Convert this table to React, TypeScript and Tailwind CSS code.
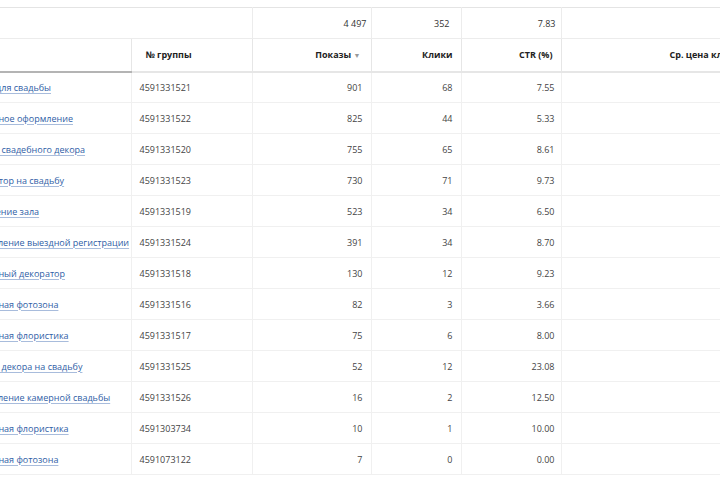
const rows = [
    { name: 'Декор для свадьбы', group: '4591331521', shows: '901', clicks: '68', ctr: '7.55' },
    { name: 'Свадебное оформление', group: '4591331522', shows: '825', clicks: '44', ctr: '5.33' },
    { name: 'Аренда свадебного декора', group: '4591331520', shows: '755', clicks: '65', ctr: '8.61' },
    { name: 'Декоратор на свадьбу', group: '4591331523', shows: '730', clicks: '71', ctr: '9.73' },
    { name: 'Украшение зала', group: '4591331519', shows: '523', clicks: '34', ctr: '6.50' },
    { name: 'Оформление выездной регистрации', group: '4591331524', shows: '391', clicks: '34', ctr: '8.70' },
    { name: 'Свадебный декоратор', group: '4591331518', shows: '130', clicks: '12', ctr: '9.23' },
    { name: 'Свадебная фотозона', group: '4591331516', shows: '82', clicks: '3', ctr: '3.66' },
    { name: 'Свадебная флористика', group: '4591331517', shows: '75', clicks: '6', ctr: '8.00' },
    { name: 'Аренда декора на свадьбу', group: '4591331525', shows: '52', clicks: '12', ctr: '23.08' },
    { name: 'Оформление камерной свадьбы', group: '4591331526', shows: '16', clicks: '2', ctr: '12.50' },
    { name: 'Свадебная флористика', group: '4591303734', shows: '10', clicks: '1', ctr: '10.00' },
    { name: 'Свадебная фотозона', group: '4591073122', shows: '7', clicks: '0', ctr: '0.00' },
];

const cell = 'h-[31px] border-b border-[#f0f0f0] p-0 align-middle';
const vline = 'border-l border-[#e6e6e6]';

export default function App() {
    return (
        <div className="h-[480px] w-[720px] overflow-hidden bg-white" style={{ fontFamily: '"Open Sans", "Noto Sans", sans-serif' }}>
            <table className="ml-[-41px] mt-[7px] w-[852px] table-fixed border-collapse text-[9px] leading-none text-[#444]">
                <colgroup>
                    <col className="w-[172px]" />
                    <col className="w-[121px]" />
                    <col className="w-[119px]" />
                    <col className="w-[90px]" />
                    <col className="w-[100px]" />
                    <col className="w-[250px]" />
                </colgroup>
                <thead>
                    <tr className="border-t border-[#e4e4e4]">
                        <td colSpan={2} className="h-[31px] border-b border-[#ececec] p-0" />
                        <td className={`h-[31px] border-b border-[#ececec] ${vline} pr-[4px] text-right text-[#333]`}>4 497</td>
                        <td className={`h-[31px] border-b border-[#ececec] ${vline} pr-[11px] text-right text-[#333]`}>352</td>
                        <td className={`h-[31px] border-b border-[#ececec] ${vline} pr-[5px] text-right text-[#333]`}>7.83</td>
                        <td className={`h-[31px] border-b border-[#ececec] ${vline}`} />
                    </tr>
                    <tr>
                        <th className="h-[33px] border-b-2 border-[#b4b4b4] pl-[8px] text-left font-bold text-[#222]">Группа</th>
                        <th className={`h-[33px] border-b-2 border-[#b4b4b4] ${vline} pl-[14px] text-left font-bold text-[#222]`}>№ группы</th>
                        <th className={`h-[33px] border-b-2 border-[#b4b4b4] ${vline} pr-[10px] text-right font-bold text-[#222]`}>
                            Показы <span className="text-[7px] font-normal text-[#999]">▼</span>
                        </th>
                        <th className={`h-[33px] border-b-2 border-[#b4b4b4] ${vline} pr-[8px] text-right font-bold text-[#222]`}>Клики</th>
                        <th className={`h-[33px] border-b-2 border-[#b4b4b4] ${vline} pr-[8px] text-right font-bold text-[#222]`}>CTR (%)</th>
                        <th className={`h-[33px] border-b-2 border-[#b4b4b4] ${vline} pl-[108px] text-left font-bold text-[#222] whitespace-nowrap`}>Ср. цена клика</th>
                    </tr>
                </thead>
                <tbody>
                    {rows.map((r, i) => (
                        <tr key={i}>
                            <td className={`${cell} pl-[8px] whitespace-nowrap`}>
                                <a href="#" className="text-[#2f5ea6] underline decoration-[#a8bcdc] underline-offset-2">{r.name}</a>
                            </td>
                            <td className={`${cell} ${vline} pl-[8px]`}>{r.group}</td>
                            <td className={`${cell} ${vline} pr-[8px] text-right`}>{r.shows}</td>
                            <td className={`${cell} ${vline} pr-[8px] text-right`}>{r.clicks}</td>
                            <td className={`${cell} ${vline} pr-[6px] text-right`}>{r.ctr}</td>
                            <td className={`${cell} ${vline}`} />
                        </tr>
                    ))}
                </tbody>
            </table>
        </div>
    );
}
